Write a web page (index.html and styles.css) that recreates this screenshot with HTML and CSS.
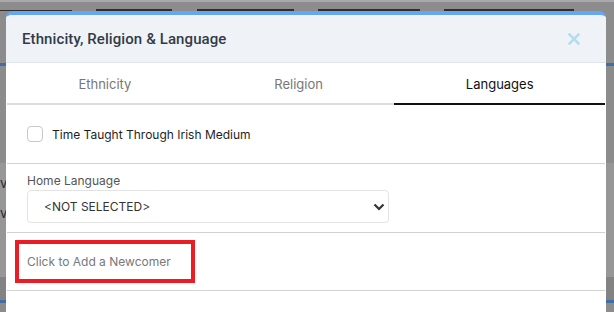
FILE: index.html
```html
<!DOCTYPE html>
<html>
<head>
<meta charset="utf-8">
<link rel="stylesheet" href="styles.css">
</head>
<body>
<div class="backdrop">
  <div class="bd-top"></div>
  <div class="bd-seg s1"></div>
  <div class="bd-seg s2"></div>
  <div class="bd-seg s3"></div>
  <div class="bd-seg s4"></div>
  <div class="bd-seg s5"></div>
  <div class="bd-blue b1"></div>
  <div class="bd-panel"></div>
  <div class="bd-dark"></div>
  <div class="bd-blue b2"></div>
  <span class="bd-text t1">va</span>
  <span class="bd-text t2">v</span>
</div>
<div class="modal">
  <div class="modal-header">
    <h4 class="modal-title">Ethnicity, Religion &amp; Language</h4>
    <button class="close" aria-label="Close">
      <svg width="12" height="12" viewBox="0 0 12 12"><path d="M1.5 1.5 L10.5 10.5 M10.5 1.5 L1.5 10.5" stroke="#b6dcf0" stroke-width="2.6" stroke-linecap="square"/></svg>
    </button>
  </div>
  <div class="tabs">
    <div class="tab">Ethnicity</div>
    <div class="tab">Religion</div>
    <div class="tab active">Languages</div>
  </div>
  <div class="section check-row">
    <span class="checkbox"></span>
    <span class="check-label">Time Taught Through Irish Medium</span>
  </div>
  <div class="section field">
    <label class="field-label">Home Language</label>
    <div class="select">
      <span>&lt;NOT SELECTED&gt;</span>
      <svg width="12" height="8" viewBox="0 0 12 8"><path d="M1.5 1.5 L6 6 L10.5 1.5" fill="none" stroke="#333" stroke-width="2.2"/></svg>
    </div>
  </div>
  <div class="section newcomer-row">
    <div class="newcomer">Click to Add a Newcomer</div>
  </div>
  <div class="rest"></div>
</div>
</body>
</html>
```
FILE: styles.css
```css
html, body {
  margin: 0;
  padding: 0;
}
body {
  width: 614px;
  height: 312px;
  overflow: hidden;
  background: #8c8c8c;
  font-family: Inter, "Noto Sans", sans-serif;
  position: relative;
}
.backdrop {
  position: absolute;
  inset: 0;
}
.bd-top {
  position: absolute;
  left: 0; right: 0; top: 0;
  height: 2px;
  background: #a9a9ad;
}
.bd-seg {
  position: absolute;
  top: 9px;
  height: 2px;
  background: #2e2e2e;
}
.s1 { left: 0; width: 72px; top: 10px; height: 1px; }
.s2 { left: 96px; width: 76px; }
.s3 { left: 197px; width: 97px; }
.s4 { left: 318px; width: 102px; }
.s5 { left: 444px; width: 130px; }
.bd-blue {
  position: absolute;
  left: 0; right: 0;
  height: 3px;
  background: #3f6ea6;
}
.b1 { top: 63px; }
.b2 { top: 300px; }
.bd-panel {
  position: absolute;
  left: 0; right: 0;
  top: 163px;
  height: 114px;
  background: #979797;
}
.bd-dark {
  position: absolute;
  left: 0; right: 0;
  top: 277px;
  height: 23px;
  background: #838383;
}
.bd-text {
  position: absolute;
  left: 0;
  font-size: 13px;
  color: #1d2a3c;
}
.t1 { top: 175px; }
.t2 { top: 205px; }

.modal {
  position: relative;
  margin: 11px 0 0 6px;
  width: 600px;
  height: 301px;
  background: #fff;
  border-top: 4px solid #64a6f7;
  border-radius: 7px 7px 0 0;
  overflow: hidden;
}
.modal-header {
  height: 47px;
  background: #eff3f8;
  border-bottom: 1px solid #dfe5ec;
  display: flex;
  align-items: center;
  justify-content: space-between;
  padding: 0 26px 0 16px;
}
.modal-title {
  margin: 0;
  font-family: Roboto, "Noto Sans", sans-serif;
  font-size: 15px;
  font-weight: 500;
  color: #333b47;
  letter-spacing: 0.1px;
}
.close {
  border: 0;
  background: none;
  padding: 0;
  width: 12px;
  height: 12px;
  display: flex;
}
.tabs {
  display: flex;
  margin: 0 1px;
  height: 42px;
}
.tab {
  flex: 1 1 auto;
  display: flex;
  align-items: center;
  justify-content: center;
  font-size: 13px;
  color: #777;
  border-bottom: 2px solid #dddddd;
  padding-top: 2px;
  box-sizing: border-box;
}
.tab.active {
  color: #111;
  border-bottom-color: #111;
}
.section {
  margin: 0 1px;
  border-bottom: 1px solid #d2d2d2;
  box-sizing: border-box;
}
.check-row {
  height: 59px;
  display: flex;
  align-items: center;
  padding-left: 20px;
  gap: 9px;
}
.checkbox {
  width: 14px;
  height: 14px;
  border: 1px solid #c8c8c8;
  border-radius: 4px;
  background: #fff;
}
.check-label {
  font-size: 12px;
  color: #1e1e1e;
}
.field {
  height: 69px;
  padding: 9px 0 0 20px;
  display: flex;
  flex-direction: column;
  gap: 2px;
}
.field-label {
  font-size: 12px;
  color: #555;
  line-height: 15px;
}
.select {
  width: 362px;
  height: 33px;
  box-sizing: border-box;
  border: 1px solid #e3e3e3;
  border-radius: 4px;
  display: flex;
  align-items: center;
  justify-content: space-between;
  padding: 0 3px 0 16px;
  font-size: 12px;
  color: #333;
}
.newcomer-row {
  height: 58px;
  padding: 7px 0 0 8px;
}
.newcomer {
  width: 180px;
  height: 43px;
  box-sizing: border-box;
  border: 4px solid #ec1c24;
  padding-left: 8px;
  display: flex;
  align-items: center;
  font-size: 12px;
  color: #787878;
}
```
